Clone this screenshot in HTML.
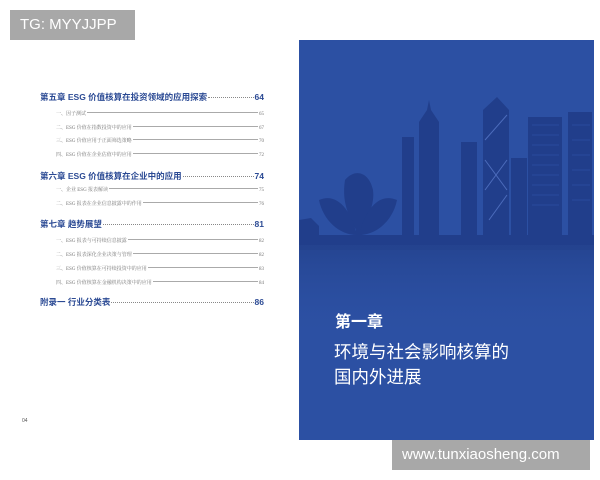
<!DOCTYPE html>
<html><head><meta charset="utf-8"><style>
*{margin:0;padding:0;box-sizing:border-box}
body{width:600px;height:480px;background:#fff;position:relative;overflow:hidden;font-family:"Liberation Sans","Noto Sans CJK SC",sans-serif}
.a{position:absolute;white-space:nowrap}
.ch{left:40px;width:224px;font-size:8.5px;font-weight:bold;color:#2b4a94;display:flex;align-items:baseline}
.sub{left:56px;width:208px;font-size:5px;color:#777;display:flex;align-items:baseline;font-family:"Liberation Serif","Noto Serif CJK SC",serif}
.dots{flex:1;border-bottom:1px dotted #888;margin:0 1px;transform:translateY(-2px)}
.sub .dots{border-bottom:0.6px solid #aaa}
.wm{background:#a8a8a8;color:#fff;font-size:15px;line-height:30px;padding-left:10px}
</style></head><body>
<div class="a wm" style="left:10px;top:10px;width:125px;height:30px">TG: MYYJJPP</div>

<div class="a ch" style="top:91px">第五章 ESG 价值核算在投资领域的应用探索<span class="dots"></span>64</div>
<div class="a sub" style="top:110px">一、因子测试<span class="dots"></span>65</div>
<div class="a sub" style="top:124px">二、ESG 价值在指数投资中的应用<span class="dots"></span>67</div>
<div class="a sub" style="top:137px">三、ESG 价值应用于正面筛选策略<span class="dots"></span>70</div>
<div class="a sub" style="top:151px">四、ESG 价值在企业估值中的应用<span class="dots"></span>72</div>
<div class="a ch" style="top:170px">第六章 ESG 价值核算在企业中的应用<span class="dots"></span>74</div>
<div class="a sub" style="top:186px">一、企业 ESG 报表解读<span class="dots"></span>75</div>
<div class="a sub" style="top:200px">二、ESG 报表在企业信息披露中的作用<span class="dots"></span>76</div>
<div class="a ch" style="top:218px">第七章 趋势展望<span class="dots"></span>81</div>
<div class="a sub" style="top:237px">一、ESG 报表与可持续信息披露<span class="dots"></span>82</div>
<div class="a sub" style="top:251px">二、ESG 报表深化企业决策与管理<span class="dots"></span>82</div>
<div class="a sub" style="top:265px">三、ESG 价值核算在可持续投资中的应用<span class="dots"></span>83</div>
<div class="a sub" style="top:279px">四、ESG 价值核算在金融机构决策中的应用<span class="dots"></span>84</div>
<div class="a ch" style="top:296px">附录一 行业分类表<span class="dots"></span>86</div>
<div class="a" style="left:22px;top:418px;font-size:5px;color:#555">04</div>

<div class="a" style="left:299px;top:40px;width:295px;height:400px;background:#2c50a3;overflow:hidden">
<svg width="295" height="400" viewBox="0 0 295 400">
<defs><linearGradient id="g" x1="0" y1="0" x2="0" y2="1"><stop offset="0" stop-color="#24438f" stop-opacity=".9"/><stop offset="1" stop-color="#2c50a3" stop-opacity="0"/></linearGradient></defs>
<g fill="#213e8b">
<path d="M0 180 L12 178 L20 186 L20 210 L0 210Z"/>
<path d="M46 140 C56 128 70 132 74 150 C76 165 68 180 60 195 C52 180 42 165 46 140Z"/>
<path d="M20 160 C38 152 52 170 58 195 C40 195 24 180 20 160Z"/>
<path d="M98 160 C80 152 66 170 60 195 C78 195 94 180 98 160Z"/>
<rect x="57" y="190" width="6" height="15"/>
<rect x="103" y="97" width="12" height="113"/>
<path d="M120 210 L120 82 L128 70 L130 60 L132 70 L140 82 L140 210Z"/>
<rect x="162" y="102" width="16" height="108"/>
<path d="M184 210 L184 70 L198 57 L210 70 L210 210Z"/>
<rect x="212" y="118" width="16" height="92"/>
<rect x="229" y="77" width="34" height="133"/>
<rect x="269" y="72" width="24" height="138"/>
<rect x="0" y="195" width="295" height="15"/>
</g>
<g stroke="#4c6cbc" stroke-width="1" fill="none"><path d="M186 150 L208 120 M186 120 L208 150 M186 100 L208 75 M190 180 L208 155"/></g>
<g stroke="#3358ad" stroke-width=".6"><path d="M233 85 H260 M233 95 H260 M233 105 H260 M233 115 H260 M233 125 H260 M233 135 H260 M233 145 H260 M233 155 H260 M233 165 H260 M273 85 H291 M273 100 H291 M273 115 H291 M273 130 H291 M273 145 H291 M273 160 H291"/></g>
<rect x="0" y="205" width="295" height="95" fill="url(#g)"/>
</svg>
<div class="a" style="left:36px;top:268px;color:#fff;font-size:16px;font-weight:bold">第一章</div>
<div class="a" style="left:35px;top:300px;color:#fff;font-size:17.5px;line-height:25px">环境与社会影响核算的<br>国内外进展</div>
</div>
<div class="a wm" style="left:392px;top:440px;width:198px;height:30px;font-size:15px">www.tunxiaosheng.com</div>
</body></html>
